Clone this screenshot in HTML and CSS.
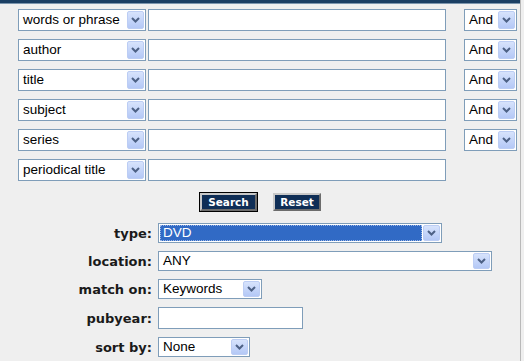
FILE: index.html
```html
<!DOCTYPE html>
<html>
<head>
<meta charset="utf-8">
<link rel="stylesheet" href="styles.css">
</head>
<body>
<div class="frame">
  <div class="topbar"></div>
  <div class="rows">
    <div class="row">
      <div class="sel field"><span class="val">words or phrase</span><span class="arr"><svg viewBox="0 0 9 6"><path d="M1 1 L4.5 4.5 L8 1"/></svg></span></div>
      <div class="txt query"></div>
      <div class="sel bool"><span class="val">And</span><span class="arr"><svg viewBox="0 0 9 6"><path d="M1 1 L4.5 4.5 L8 1"/></svg></span></div>
    </div>
    <div class="row">
      <div class="sel field"><span class="val">author</span><span class="arr"><svg viewBox="0 0 9 6"><path d="M1 1 L4.5 4.5 L8 1"/></svg></span></div>
      <div class="txt query"></div>
      <div class="sel bool"><span class="val">And</span><span class="arr"><svg viewBox="0 0 9 6"><path d="M1 1 L4.5 4.5 L8 1"/></svg></span></div>
    </div>
    <div class="row">
      <div class="sel field"><span class="val">title</span><span class="arr"><svg viewBox="0 0 9 6"><path d="M1 1 L4.5 4.5 L8 1"/></svg></span></div>
      <div class="txt query"></div>
      <div class="sel bool"><span class="val">And</span><span class="arr"><svg viewBox="0 0 9 6"><path d="M1 1 L4.5 4.5 L8 1"/></svg></span></div>
    </div>
    <div class="row">
      <div class="sel field"><span class="val">subject</span><span class="arr"><svg viewBox="0 0 9 6"><path d="M1 1 L4.5 4.5 L8 1"/></svg></span></div>
      <div class="txt query"></div>
      <div class="sel bool"><span class="val">And</span><span class="arr"><svg viewBox="0 0 9 6"><path d="M1 1 L4.5 4.5 L8 1"/></svg></span></div>
    </div>
    <div class="row">
      <div class="sel field"><span class="val">series</span><span class="arr"><svg viewBox="0 0 9 6"><path d="M1 1 L4.5 4.5 L8 1"/></svg></span></div>
      <div class="txt query"></div>
      <div class="sel bool"><span class="val">And</span><span class="arr"><svg viewBox="0 0 9 6"><path d="M1 1 L4.5 4.5 L8 1"/></svg></span></div>
    </div>
    <div class="row">
      <div class="sel field"><span class="val">periodical title</span><span class="arr"><svg viewBox="0 0 9 6"><path d="M1 1 L4.5 4.5 L8 1"/></svg></span></div>
      <div class="txt query"></div>
    </div>
  </div>
  <div class="buttons">
    <span class="btn focus">Search</span>
    <span class="btn">Reset</span>
  </div>
  <div class="limits">
    <div class="lbl">type:</div>
    <div class="sel ctl type"><span class="val hl">DVD</span><span class="arr"><svg viewBox="0 0 9 6"><path d="M1 1 L4.5 4.5 L8 1"/></svg></span></div>
    <div class="lbl">location:</div>
    <div class="sel ctl loc"><span class="val">ANY</span><span class="arr"><svg viewBox="0 0 9 6"><path d="M1 1 L4.5 4.5 L8 1"/></svg></span></div>
    <div class="lbl">match on:</div>
    <div class="sel ctl match"><span class="val">Keywords</span><span class="arr"><svg viewBox="0 0 9 6"><path d="M1 1 L4.5 4.5 L8 1"/></svg></span></div>
    <div class="lbl">pubyear:</div>
    <div class="txt pub"></div>
    <div class="lbl">sort by:</div>
    <div class="sel ctl sort"><span class="val">None</span><span class="arr"><svg viewBox="0 0 9 6"><path d="M1 1 L4.5 4.5 L8 1"/></svg></span></div>
  </div>
</div>
</body>
</html>
```
FILE: styles.css
```css
html, body {
  margin: 0;
  padding: 0;
}
body {
  background: #efefef;
  width: 524px;
  height: 361px;
  overflow: hidden;
}
.frame {
  width: 521px;
  height: 361px;
  border-right: 1px solid #b9b9b9;
  box-sizing: border-box;
}
.topbar {
  height: 3px;
  background: #1b3f63;
  border-bottom: 1px solid #7b95ad;
}
.rows {
  display: flex;
  flex-direction: column;
  gap: 8px;
  padding: 4px 0 0 18px;
  margin-top: 1px;
}
.row {
  display: flex;
  height: 22px;
}
.sel, .txt {
  box-sizing: border-box;
  height: 22px;
  border: 1px solid #7f9db9;
  background: #fff;
}
.sel {
  display: flex;
  align-items: center;
  padding: 1px;
  font-family: "Liberation Sans", Arial, sans-serif;
  font-size: 13.5px;
  color: #000;
}
.val {
  flex: 1;
  padding-left: 3px;
  white-space: nowrap;
  overflow: hidden;
  line-height: 18px;
}
.arr {
  width: 17px;
  height: 18px;
  box-sizing: border-box;
  border: 1px solid #bccdf4;
  border-radius: 2px;
  background: linear-gradient(#d7e3fc, #b4c8f6);
  display: flex;
  align-items: center;
  justify-content: center;
}
.arr svg {
  width: 9px;
  height: 6px;
  fill: none;
  stroke: #4d6185;
  stroke-width: 2;
}
.field { width: 128px; }
.query { width: 298px; margin-left: 2px; }
.bool { width: 53px; margin-left: 18px; }
.buttons {
  display: flex;
  gap: 16px;
  padding: 12px 0 0 200px;
  height: 18px;
}
.btn {
  box-sizing: border-box;
  height: 18px;
  padding: 0;
  background: #0f2e56;
  color: #fff;
  font-family: "DejaVu Sans", Verdana, sans-serif;
  font-weight: bold;
  font-size: 10.5px;
  line-height: 14px;
  text-align: center;
  border: 2px solid;
  border-color: #c8c8c8 #6c6c6c #6c6c6c #c8c8c8;
}
.btn.focus {
  outline: 1px solid #000;
  width: 57px;
}
.btn:not(.focus) { width: 48px; }
.limits {
  display: grid;
  grid-template-columns: 152px auto;
  column-gap: 6px;
  row-gap: 8px;
  padding-top: 12px;
  justify-items: start;
  align-items: center;
}
.lbl {
  justify-self: end;
  font-family: "DejaVu Sans", Verdana, sans-serif;
  font-weight: bold;
  font-size: 13px;
  color: #1a1a1a;
}
.ctl { height: 20px; padding: 0 1px; }
.ctl .arr { height: 16px; }
.type { width: 284px; padding: 1px; }
.type .arr { height: 16px; }
.hl {
  background: #316ac5;
  color: #fff;
  outline: 1px dotted #9ab6e6;
  outline-offset: -1px;
  margin-right: 1px;
  line-height: 16px;
}
.loc { width: 334px; }
.match { width: 104px; }
.sort { width: 92px; }
.pub { width: 145px; height: 22px; }
```
